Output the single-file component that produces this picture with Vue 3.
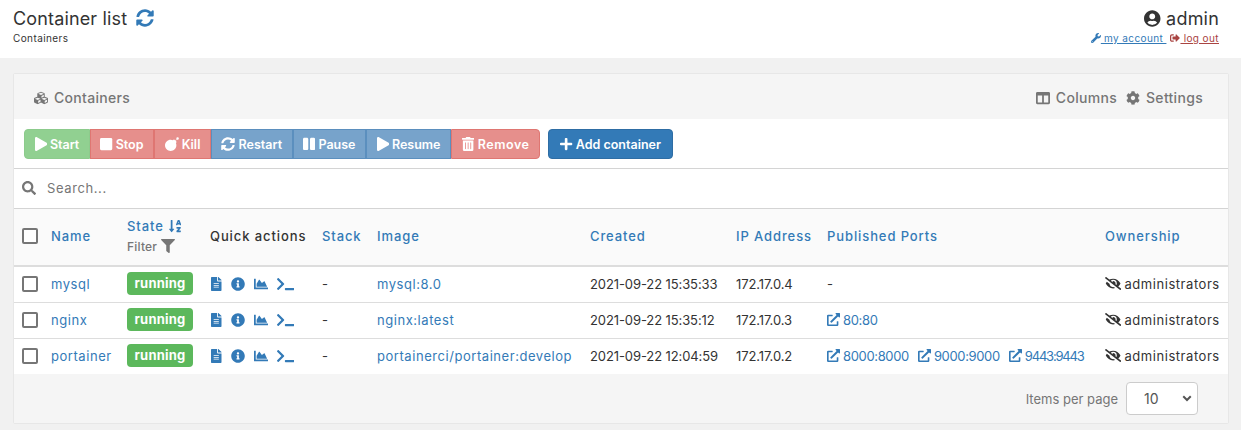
<template>
  <div class="page">
    <header class="topbar">
      <div>
        <div class="title">Container list <Ico name="sync" class="refresh" /></div>
        <div class="crumb">Containers</div>
      </div>
      <div class="user">
        <div class="username"><Ico name="user" class="user-ico" /> admin</div>
        <div class="user-links">
          <a class="account"><Ico name="wrench" /> my account </a>
          <a class="logout"><Ico name="signout" /> log out</a>
        </div>
      </div>
    </header>

    <section class="card">
      <div class="card-head">
        <div class="card-title"><Ico name="cubes" /> Containers</div>
        <div class="card-tools">
          <span><Ico name="columns" /> Columns</span>
          <span><Ico name="cog" /> Settings</span>
        </div>
      </div>

      <div class="toolbar">
        <div class="btn-group">
          <button v-for="b in actions" :key="b.label" class="btn" :class="b.type" disabled>
            <Ico :name="b.icon" /> {{ b.label }}
          </button>
        </div>
        <button class="btn add"><Ico name="plus" /> Add container</button>
      </div>

      <div class="search">
        <Ico name="search" />
        <span>Search...</span>
      </div>

      <table>
        <colgroup>
          <col class="c-check" /><col class="c-name" /><col class="c-state" /><col class="c-quick" /><col class="c-stack" />
          <col class="c-image" /><col class="c-created" /><col class="c-ip" /><col class="c-ports" /><col class="c-owner" />
        </colgroup>
        <thead>
          <tr>
            <th><span class="check"></span></th>
            <th><a>Name</a></th>
            <th class="state-col">
              <a>State <Ico name="sort" class="sort" /></a>
              <div class="filter">Filter <Ico name="filter" /></div>
            </th>
            <th class="plain">Quick actions</th>
            <th><a>Stack</a></th>
            <th><a>Image</a></th>
            <th><a>Created</a></th>
            <th><a>IP Address</a></th>
            <th><a>Published Ports</a></th>
            <th><a>Ownership</a></th>
          </tr>
        </thead>
        <tbody>
          <tr v-for="c in containers" :key="c.name">
            <td><span class="check"></span></td>
            <td><a>{{ c.name }}</a></td>
            <td><span class="badge">running</span></td>
            <td>
              <div class="quick">
                <Ico name="file" /><Ico name="info" /><Ico name="chart" /><Ico name="terminal" />
              </div>
            </td>
            <td>-</td>
            <td><a>{{ c.image }}</a></td>
            <td class="num">{{ c.created }}</td>
            <td class="num">{{ c.ip }}</td>
            <td class="num">
              <span v-if="!c.ports.length">-</span>
              <a v-for="p in c.ports" :key="p" class="port"><Ico name="link" />{{ p }}</a>
            </td>
            <td><Ico name="eyeslash" class="eye" /> administrators</td>
          </tr>
        </tbody>
      </table>

      <div class="card-foot">
        <span>Items per page</span>
        <div class="select">10 <svg viewBox="0 0 12 8"><path d="M1.5 1.5 6 6l4.5-4.5" /></svg></div>
      </div>
    </section>
  </div>
</template>

<script setup>
import { h } from 'vue'

const icons = {
  sync: [512, 'M370.72 133.28C339.458 104.008 298.888 87.962 255.848 88c-77.458.068-144.328 53.178-162.791 126.85-1.344 5.363-6.122 9.15-11.651 9.15H24.103c-7.498 0-13.194-6.807-11.807-14.176C33.933 94.924 134.813 8 256 8c66.448 0 126.791 26.136 171.315 68.685L463.03 40.97C478.149 25.851 504 36.559 504 57.941V192c0 13.255-10.745 24-24 24H345.941c-21.382 0-32.09-25.851-16.971-40.971l41.75-41.749zM32 296h134.059c21.382 0 32.09 25.851 16.971 40.971l-41.75 41.75c31.262 29.273 71.835 45.319 114.876 45.28 77.418-.07 144.315-53.144 162.787-126.849 1.344-5.363 6.122-9.15 11.651-9.15h57.304c7.498 0 13.194 6.807 11.807 14.176C478.067 417.076 377.187 504 256 504c-66.448 0-126.791-26.136-171.315-68.685L48.97 471.03C33.851 486.149 8 475.441 8 454.059V320c0-13.255 10.745-24 24-24z'],
  search: [512, 'M505 442.7L405.3 343c-4.5-4.5-10.6-7-17-7H372c27.6-35.3 44-79.7 44-128C416 93.1 322.9 0 208 0S0 93.1 0 208s93.1 208 208 208c48.3 0 92.7-16.4 128-44v16.3c0 6.4 2.5 12.5 7 17l99.7 99.7c9.4 9.4 24.6 9.4 33.9 0l28.3-28.3c9.4-9.4 9.4-24.6.1-34zM208 336c-70.7 0-128-57.2-128-128 0-70.7 57.2-128 128-128 70.7 0 128 57.2 128 128 0 70.7-57.2 128-128 128z'],
  play: [448, 'M424.4 214.7L72.4 6.6C43.8-10.3 0 6.1 0 47.9V464c0 37.5 40.7 60.1 72.4 41.3l352-208c31.4-18.5 31.5-64.1 0-82.6z'],
  stop: [448, 'M400 32H48C21.5 32 0 53.5 0 80v352c0 26.5 21.5 48 48 48h352c26.5 0 48-21.5 48-48V80c0-26.5-21.5-48-48-48z'],
  bomb: [512, 'M440.5 88.5l-52 52L415 167c9.4 9.4 9.4 24.6 0 33.9l-17.4 17.4c11.8 26.1 18.4 55.1 18.4 85.6 0 114.9-93.1 208-208 208S0 418.9 0 304 93.1 96 208 96c30.5 0 59.5 6.6 85.6 18.4L311 97c9.4-9.4 24.6-9.4 33.9 0l26.5 26.5 52-52 17.1 17zM460 10a46 46 0 1 0 0 92 46 46 0 0 0 0-92z'],
  pause: [448, 'M144 479H48c-26.5 0-48-21.5-48-48V79c0-26.5 21.5-48 48-48h96c26.5 0 48 21.5 48 48v352c0 26.5-21.5 48-48 48zm304-48V79c0-26.5-21.5-48-48-48h-96c-26.5 0-48 21.5-48 48v352c0 26.5 21.5 48 48 48h96c26.5 0 48-21.5 48-48z'],
  trash: [448, 'M32 464a48 48 0 0 0 48 48h288a48 48 0 0 0 48-48V128H32zm272-256a16 16 0 0 1 32 0v224a16 16 0 0 1-32 0zm-96 0a16 16 0 0 1 32 0v224a16 16 0 0 1-32 0zm-96 0a16 16 0 0 1 32 0v224a16 16 0 0 1-32 0zM432 32H312l-9.4-18.7A24 24 0 0 0 281.1 0H166.8a23.72 23.72 0 0 0-21.4 13.3L136 32H16A16 16 0 0 0 0 48v32a16 16 0 0 0 16 16h416a16 16 0 0 0 16-16V48a16 16 0 0 0-16-16z'],
  plus: [448, 'M416 208H272V64c0-17.67-14.33-32-32-32h-32c-17.67 0-32 14.33-32 32v144H32c-17.67 0-32 14.33-32 32v32c0 17.67 14.33 32 32 32h144v144c0 17.67 14.33 32 32 32h32c17.67 0 32-14.33 32-32V304h144c17.67 0 32-14.33 32-32v-32c0-17.67-14.33-32-32-32z'],
  cog: [512, 'M487.4 315.7l-42.6-24.6c4.3-23.2 4.3-47 0-70.2l42.6-24.6c4.9-2.8 7.1-8.6 5.5-14-11.1-35.6-30-67.8-54.7-94.6-3.8-4.1-10-5.1-14.8-2.3L380.8 110c-17.9-15.4-38.5-27.3-60.8-35.1V25.8c0-5.6-3.9-10.5-9.4-11.7-36.7-8.2-74.3-7.8-109.2 0-5.5 1.2-9.4 6.1-9.4 11.7V75c-22.2 7.9-42.8 19.8-60.8 35.1L88.7 85.5c-4.9-2.8-11-1.9-14.8 2.3-24.7 26.7-43.6 58.9-54.7 94.6-1.7 5.4.6 11.2 5.5 14L67.3 221c-4.3 23.2-4.3 47 0 70.2l-42.6 24.6c-4.9 2.8-7.1 8.6-5.5 14 11.1 35.6 30 67.8 54.7 94.6 3.8 4.1 10 5.1 14.8 2.3l42.6-24.6c17.9 15.4 38.5 27.3 60.8 35.1v49.2c0 5.6 3.9 10.5 9.4 11.7 36.7 8.2 74.3 7.8 109.2 0 5.5-1.2 9.4-6.1 9.4-11.7v-49.2c22.2-7.9 42.8-19.8 60.8-35.1l42.6 24.6c4.9 2.8 11 1.9 14.8-2.3 24.7-26.7 43.6-58.9 54.7-94.6 1.5-5.5-.7-11.3-5.6-14.1zM256 336c-44.1 0-80-35.9-80-80s35.9-80 80-80 80 35.9 80 80-35.9 80-80 80z'],
  columns: [512, 'M464 32H48C21.49 32 0 53.49 0 80v352c0 26.51 21.49 48 48 48h416c26.51 0 48-21.49 48-48V80c0-26.51-21.49-48-48-48zM224 416H64V160h160v256zm224 0H288V160h160v256z'],
  user: [496, 'M248 8C111 8 0 119 0 256s111 248 248 248 248-111 248-248S385 8 248 8zm0 96c48.6 0 88 39.4 88 88s-39.4 88-88 88-88-39.4-88-88 39.4-88 88-88zm0 344c-58.7 0-111.3-26.6-146.5-68.2 18.8-35.4 55.6-59.8 98.5-59.8 2.4 0 4.8.4 7.1 1.1 13 4.2 26.6 6.9 40.9 6.9 14.3 0 28-2.7 40.9-6.9 2.3-.7 4.7-1.1 7.1-1.1 42.9 0 79.7 24.4 98.5 59.8C359.3 421.4 306.7 448 248 448z'],
  wrench: [512, 'M507.73 109.1c-2.24-9.03-13.54-12.09-20.12-5.51l-74.36 74.36-67.88-11.31-11.31-67.88 74.36-74.36c6.62-6.62 3.43-17.9-5.66-20.16-47.38-11.74-99.55.91-136.58 37.93-39.64 39.64-50.55 97.1-34.05 147.2L18.74 402.76c-24.99 24.99-24.99 65.51 0 90.5 24.99 24.99 65.51 24.99 90.5 0l213.21-213.21c50.12 16.71 107.47 5.68 147.37-34.22 37.07-37.07 49.7-89.32 37.91-136.73zM64 472c-13.25 0-24-10.75-24-24 0-13.26 10.75-24 24-24s24 10.74 24 24c0 13.25-10.75 24-24 24z'],
  signout: [512, 'M497 273L329 441c-15 15-41 4.5-41-17v-96H152c-13.3 0-24-10.7-24-24v-96c0-13.3 10.7-24 24-24h136V88c0-21.4 25.9-32 41-17l168 168c9.3 9.4 9.3 24.6 0 34zM192 436v-40c0-6.6-5.4-12-12-12H96c-17.7 0-32-14.3-32-32V160c0-17.7 14.3-32 32-32h84c6.6 0 12-5.4 12-12V76c0-6.6-5.4-12-12-12H96c-53 0-96 43-96 96v192c0 53 43 96 96 96h84c6.6 0 12-5.4 12-12z'],
  file: [384, 'M224 136V0H24C10.7 0 0 10.7 0 24v464c0 13.3 10.7 24 24 24h336c13.3 0 24-10.7 24-24V160H248c-13.2 0-24-10.8-24-24zm64 236c0 6.6-5.4 12-12 12H108c-6.6 0-12-5.4-12-12v-8c0-6.6 5.4-12 12-12h168c6.6 0 12 5.4 12 12v8zm0-64c0 6.6-5.4 12-12 12H108c-6.6 0-12-5.4-12-12v-8c0-6.6 5.4-12 12-12h168c6.6 0 12 5.4 12 12v8zm0-72v8c0 6.6-5.4 12-12 12H108c-6.6 0-12-5.4-12-12v-8c0-6.6 5.4-12 12-12h168c6.6 0 12 5.4 12 12zm96-114.1v6.1H256V0h6.1c6.4 0 12.5 2.5 17 7l97.9 98c4.5 4.5 7 10.6 7 16.9z'],
  info: [512, 'M256 8C119.043 8 8 119.083 8 256c0 136.997 111.043 248 248 248s248-111.003 248-248C504 119.083 392.957 8 256 8zm0 110c23.196 0 42 18.804 42 42s-18.804 42-42 42-42-18.804-42-42 18.804-42 42-42zm56 254c0 6.627-5.373 12-12 12h-88c-6.627 0-12-5.373-12-12v-24c0-6.627 5.373-12 12-12h12v-64h-12c-6.627 0-12-5.373-12-12v-24c0-6.627 5.373-12 12-12h64c6.627 0 12 5.373 12 12v100h12c6.627 0 12 5.373 12 12v24z'],
  chart: [512, 'M500 384c6.6 0 12 5.4 12 12v40c0 6.6-5.4 12-12 12H12c-6.6 0-12-5.4-12-12V76c0-6.6 5.4-12 12-12h40c6.6 0 12 5.4 12 12v308h436zM372.7 159.5L288 216l-85.3-113.7c-5.1-6.8-15.5-6.3-19.9 1L96 248v104h384l-89.9-187.8c-3.2-6.5-11.4-8.7-17.4-4.7z'],
  terminal: [640, 'M257.981 272.971L63.638 467.314c-9.373 9.373-24.569 9.373-33.941 0L7.029 444.647c-9.357-9.357-9.375-24.522-.04-33.901L161.011 256 6.99 101.255c-9.335-9.379-9.317-24.544.04-33.901l22.667-22.667c9.373-9.373 24.569-9.373 33.941 0L257.981 239.03c9.373 9.372 9.373 24.568 0 33.941zM640 456v-32c0-13.255-10.745-24-24-24H312c-13.255 0-24 10.745-24 24v32c0 13.255 10.745 24 24 24h304c13.255 0 24-10.745 24-24z'],
  link: [512, 'M432,320H400a16,16,0,0,0-16,16V448H64V128H208a16,16,0,0,0,16-16V80a16,16,0,0,0-16-16H48A48,48,0,0,0,0,112V464a48,48,0,0,0,48,48H400a48,48,0,0,0,48-48V336A16,16,0,0,0,432,320ZM488,0h-128c-21.37,0-32.05,25.91-17,41l35.73,35.73L135,320.37a24,24,0,0,0,0,34L157.67,377a24,24,0,0,0,34,0L435.28,133.32,471,169c15,15,41,4.5,41-17V24A24,24,0,0,0,488,0Z'],
  eyeslash: [640, 'M320 400c-75.85 0-137.25-58.71-142.9-133.11L72.2 185.82c-13.79 17.3-26.48 35.59-36.72 55.59a32.35 32.35 0 0 0 0 29.19C89.71 376.41 197.07 448 320 448c26.91 0 52.87-4 77.89-10.46L346 397.39a144.13 144.13 0 0 1-26 2.61zm313.82 58.1l-110.55-85.44a331.25 331.25 0 0 0 81.25-102.07 32.35 32.35 0 0 0 0-29.19C550.29 135.59 442.93 64 320 64a308.15 308.15 0 0 0-147.32 37.7L45.46 3.37A16 16 0 0 0 23 6.18L3.37 31.45A16 16 0 0 0 6.18 53.9l588.36 454.73a16 16 0 0 0 22.46-2.81l19.64-25.27a16 16 0 0 0-2.82-22.45zm-183.72-142l-39.3-30.38A94.75 94.75 0 0 0 416 256a94.76 94.76 0 0 0-121.31-92.21A47.65 47.65 0 0 1 304 192a46.64 46.64 0 0 1-1.54 10l-73.61-56.89A142.31 142.31 0 0 1 320 112a143.92 143.92 0 0 1 144 144c0 21.63-5.29 41.79-13.9 60.11z'],
  filter: [512, 'M487.976 0H24.028C2.71 0-8.047 25.866 7.058 40.971L192 225.941V432c0 7.831 3.821 15.17 10.237 19.662l80 55.98C298.02 518.69 320 507.493 320 487.98V225.941l184.947-184.97C520.021 25.896 509.338 0 487.976 0z'],
  cubes: [512, 'M488.6 250.2L392 214V105.5c0-15-9.3-28.4-23.4-33.7l-100-37.5c-8.1-3.1-17.1-3.1-25.3 0l-100 37.5c-14.1 5.3-23.4 18.7-23.4 33.7V214l-96.6 36.2C9.3 255.5 0 268.9 0 283.9V394c0 13.6 7.7 26.1 19.9 32.2l100 50c10.1 5.1 22.1 5.1 32.2 0l103.9-52 103.9 52c10.1 5.1 22.1 5.1 32.2 0l100-50c12.2-6.1 19.9-18.6 19.9-32.2V283.9c0-15-9.3-28.4-23.4-33.7zM358 214.8l-85 31.9v-68.2l85-37v73.3zM154 104.1l102-38.2 102 38.2v.6l-102 41.4-102-41.4v-.6zm84 291.1l-85 42.5v-79.1l85-38.8v75.4zm0-112l-102 41.4-102-41.4v-.6l102-38.2 102 38.2v.6zm240 112l-85 42.5v-79.1l85-38.8v75.4zm0-112l-102 41.4-102-41.4v-.6l102-38.2 102 38.2v.6z'],
  sort: [448, 'M176 352h-48V48a16 16 0 0 0-16-16H80a16 16 0 0 0-16 16v304H16c-14.19 0-21.36 17.24-11.28 27.31l80 96a16 16 0 0 0 22.62 0l80-96C197.35 369.26 190.22 352 176 352zm240-64H288a16 16 0 0 0-16 16v32a16 16 0 0 0 16 16h56l-61.26 70.45A32 32 0 0 0 272 446.37V464a16 16 0 0 0 16 16h128a16 16 0 0 0 16-16v-32a16 16 0 0 0-16-16h-56l61.26-70.45A32 32 0 0 0 432 321.63V304a16 16 0 0 0-16-16zm31.06-85.38l-59.27-160A16 16 0 0 0 372.72 32h-41.44a16 16 0 0 0-15.07 10.62l-59.27 160A16 16 0 0 0 272 224h24.83a16 16 0 0 0 15.23-11.08l4.42-12.92h71l4.42 12.92A16 16 0 0 0 407.16 224H432a16 16 0 0 0 15.06-21.38zM335.61 144L352 96l16.39 48z']
}

// fixed-height svg, width comes from the icon's own viewBox
const Ico = (props) => {
  const [w, d] = icons[props.name]
  return h('svg', { class: 'ico', viewBox: `0 0 ${w} 512`, fill: 'currentColor' }, [h('path', { d })])
}
Ico.props = ['name']

const actions = [
  { label: 'Start', icon: 'play', type: 'green' },
  { label: 'Stop', icon: 'stop', type: 'red' },
  { label: 'Kill', icon: 'bomb', type: 'red' },
  { label: 'Restart', icon: 'sync', type: 'blue' },
  { label: 'Pause', icon: 'pause', type: 'blue' },
  { label: 'Resume', icon: 'play', type: 'blue' },
  { label: 'Remove', icon: 'trash', type: 'red' }
]

const containers = [
  { name: 'mysql', image: 'mysql:8.0', created: '2021-09-22 15:35:33', ip: '172.17.0.4', ports: [] },
  { name: 'nginx', image: 'nginx:latest', created: '2021-09-22 15:35:12', ip: '172.17.0.3', ports: ['80:80'] },
  { name: 'portainer', image: 'portainerci/portainer:develop', created: '2021-09-22 12:04:59', ip: '172.17.0.2', ports: ['8000:8000', '9000:9000', '9443:9443'] }
]
</script>

<style>
html, body {
  background: #f1f1f1;
}
</style>

<style scoped>
.page {
  width: 1241px;
  height: 430px;
  overflow: hidden;
  font-family: Inter, "Noto Sans", sans-serif;
  font-size: 13px;
  color: #333;
}

.ico {
  height: 1em;
  width: auto;
  vertical-align: -0.125em;
}

a {
  color: #337ab7;
}

.topbar {
  height: 58px;
  box-sizing: border-box;
  background: #fff;
  padding: 8px 22px 0 13px;
  display: flex;
  justify-content: space-between;
}

.title {
  font-size: 18px;
  line-height: 22px;
  letter-spacing: 0.15px;
}

.refresh {
  color: #337ab7;
  margin-left: 4px;
}

.crumb {
  font-size: 10px;
  line-height: 14px;
  margin-top: 1px;
  letter-spacing: 0.4px;
}

.user {
  text-align: right;
}

.username {
  font-size: 18px;
  line-height: 22px;
  letter-spacing: 0.2px;
}

.user-ico {
  height: 17px;
  vertical-align: -2px;
}

.user-links {
  font-size: 10px;
  line-height: 14px;
  margin-top: 1px;
  letter-spacing: 0.4px;
}

.user-links a {
  text-decoration: underline;
}

.logout {
  color: #a94442;
  margin-left: 4px;
}

.card {
  margin: 15px 12px 0 13px;
  height: 351px;
  box-sizing: border-box;
  border: 1px solid #e7e7e7;
  border-radius: 2px;
  background: #fff;
}

.card-head {
  height: 45px;
  box-sizing: border-box;
  background: #f5f5f5;
  padding: 2px 25px 0 20px;
  display: flex;
  align-items: center;
  justify-content: space-between;
  color: #767676;
  font-size: 14px;
  font-weight: 500;
  letter-spacing: 0.3px;
}

.card-head .ico {
  margin-right: 2px;
}

.card-tools {
  display: flex;
  gap: 9px;
}

.toolbar {
  height: 50px;
  box-sizing: border-box;
  padding: 10px 10px 0;
  display: flex;
  gap: 8px;
  border-bottom: 1px solid #d4d4d4;
}

.btn-group {
  display: flex;
}

.btn {
  height: 30px;
  padding: 0 9.5px;
  border: 1px solid transparent;
  font: inherit;
  font-weight: 600;
  font-size: 12.5px;
  color: #fff;
  white-space: nowrap;
}

.btn .ico {
  height: 14px;
  vertical-align: -2px;
}

.btn:first-child {
  border-radius: 4px 0 0 4px;
}

.btn:last-child {
  border-radius: 0 4px 4px 0;
  padding: 0 10px;
  letter-spacing: 0.5px;
}

.green {
  background: #91d091;
  border-color: #8ccb8c;
}

.red {
  background: #e68f8c;
  border-color: #df7672;
}

.blue {
  background: #77a3cb;
  border-color: #5b8fbe;
}

.btn.add {
  padding: 0 11px;
  background: #337ab7;
  border-color: #2e6da4;
  border-radius: 4px;
  letter-spacing: 0;
}

.search {
  height: 40px;
  box-sizing: border-box;
  padding: 0 0 2px 8px;
  display: flex;
  align-items: center;
  gap: 11px;
  color: #767676;
  letter-spacing: 0.6px;
  border-bottom: 1px solid #d4d4d4;
}

.search .ico {
  height: 14px;
}

table {
  width: 100%;
  table-layout: fixed;
  border-collapse: collapse;
  letter-spacing: 0.55px;
}

.c-check { width: 37px; }
.c-name { width: 76px; }
.c-state { width: 83px; }
.c-quick { width: 112px; }
.c-stack { width: 55px; }
.c-image { width: 213px; }
.c-created { width: 146px; }
.c-ip { width: 91px; }
.c-ports { width: 278px; }

th {
  height: 54px;
  padding: 0 0 2px;
  background: #fafafa;
  border-bottom: 2px solid #ddd;
  text-align: left;
  font-weight: 500;
  letter-spacing: 0.9px;
}

th.state-col {
  padding-bottom: 0;
}

th:first-child,
td:first-child {
  padding-left: 8px;
}

th.plain {
  color: #333;
}

.sort {
  height: 14px;
  margin-left: 1px;
}

.filter {
  color: #767676;
  font-size: 12px;
  line-height: 18px;
  margin-top: 4px;
  letter-spacing: 0.2px;
}

.filter .ico {
  height: 14px;
  vertical-align: -2px;
}

td {
  height: 33px;
  padding: 0 0 2px;
  border-bottom: 1px solid #ddd;
  white-space: nowrap;
}

tbody tr:last-child td {
  border-bottom: 0;
}

td.num {
  letter-spacing: -0.1px;
}

.check {
  display: block;
  width: 16px;
  height: 16px;
  box-sizing: border-box;
  border: 2px solid #767676;
  border-radius: 2px;
  background: #fff;
}

.badge {
  display: inline-block;
  width: 66px;
  height: 23px;
  line-height: 23px;
  text-align: center;
  border-radius: 4px;
  background: #5cb85c;
  color: #fff;
  font-weight: 700;
  letter-spacing: 0.2px;
}

.quick {
  display: flex;
  align-items: center;
  gap: 9px;
  padding-left: 1px;
  color: #337ab7;
}

.quick .ico {
  height: 14px;
}

.port {
  margin-right: 9px;
  letter-spacing: -0.35px;
}

.port:nth-child(3) {
  letter-spacing: -1.2px;
}

.port .ico {
  margin-right: 3px;
}

.eye {
  margin-right: -1px;
}

.card-foot {
  height: 49px;
  box-sizing: border-box;
  background: #f5f5f5;
  padding: 0 30px 0 0;
  display: flex;
  align-items: center;
  justify-content: flex-end;
  gap: 8px;
  color: #767676;
}

.select {
  width: 72px;
  height: 33px;
  box-sizing: border-box;
  padding: 0 5px 0 17px;
  display: flex;
  align-items: center;
  justify-content: space-between;
  background: #fff;
  border: 1px solid #ccc;
  border-radius: 4px;
  color: #555;
  font-size: 14px;
}

.select svg {
  width: 10px;
  fill: none;
  stroke: #555;
  stroke-width: 2.4;
}
</style>
